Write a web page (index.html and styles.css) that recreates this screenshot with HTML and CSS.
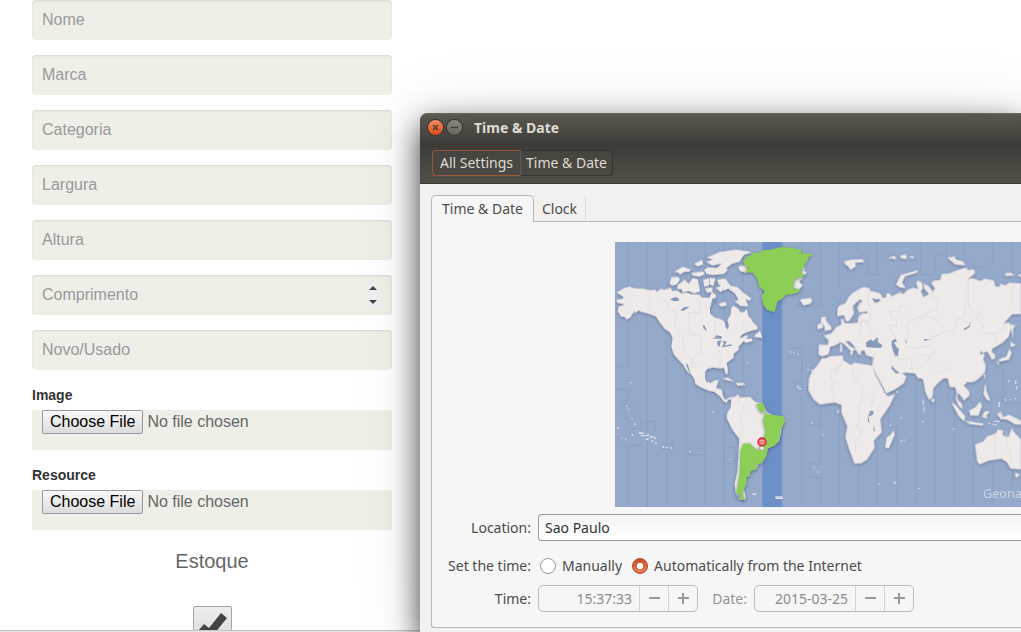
FILE: index.html
```html
<!DOCTYPE html>
<html lang="pt">
<head>
<meta charset="utf-8">
<title>Time &amp; Date</title>
<link rel="stylesheet" href="styles.css">
</head>
<body>
<main class="browser">
  <form class="product">
    <input class="field" type="text" placeholder="Nome" aria-label="Nome">
    <input class="field" type="text" placeholder="Marca" aria-label="Marca">
    <input class="field" type="text" placeholder="Categoria" aria-label="Categoria">
    <input class="field" type="text" placeholder="Largura" aria-label="Largura">
    <input class="field" type="text" placeholder="Altura" aria-label="Altura">
    <div class="number">
      <input class="field" type="number" placeholder="Comprimento" aria-label="Comprimento">
      <div class="stepper">
        <button type="button" aria-label="Increase"><svg width="8" height="4" viewBox="0 0 8 4"><path d="M0 4L4 0L8 4Z"/></svg></button>
        <button type="button" aria-label="Decrease"><svg width="8" height="4" viewBox="0 0 8 4"><path d="M0 0H8L4 4Z"/></svg></button>
      </div>
    </div>
    <input class="field" type="text" placeholder="Novo/Usado" aria-label="Novo/Usado">
    <div class="upload">
      <label for="image">Image</label>
      <input class="file" id="image" type="file">
    </div>
    <div class="upload">
      <label for="resource">Resource</label>
      <input class="file" id="resource" type="file">
    </div>
    <div class="stock">
      <label for="stock">Estoque</label>
      <span class="tick">
        <input id="stock" type="checkbox" checked>
        <svg width="29" height="26" viewBox="0 0 29 26"><path d="M0 18L6 11L11 15L23 0L29 5L12 26Z"/></svg>
      </span>
    </div>
  </form>
  <div class="edge"></div>
</main>

<section class="window">
  <header class="titlebar">
    <button class="control close" type="button" aria-label="Close"><svg width="15" height="15" viewBox="0 0 15 15"><path d="M5 5L10 10M10 5L5 10"/></svg></button>
    <button class="control minimize" type="button" aria-label="Minimize"><svg width="15" height="15" viewBox="0 0 15 15"><path d="M4 7.500H11"/></svg></button>
    <h1>Time &amp; Date</h1>
  </header>
  <nav class="toolbar">
    <button class="crumb first" type="button">All Settings</button><button class="crumb" type="button">Time &amp; Date</button>
  </nav>
  <div class="content">
    <div class="tabs">
      <button class="tab active" type="button">Time &amp; Date</button>
      <button class="tab" type="button">Clock</button>
      <div class="rule"></div>
    </div>
    <div class="panel">
      <div class="map">
        <svg viewBox="15 12 1218 795" preserveAspectRatio="xMinYMin slice" role="img" aria-label="World map of time zones">
          <defs>
            <filter id="coast" x="-5%" y="-5%" width="110%" height="110%"><feDropShadow dx="0" dy="3" stdDeviation="4" flood-color="#45536e" flood-opacity=".65"/></filter>
          </defs>
          <rect class="sea" x="15" y="12" width="1218" height="795"/>
          <rect class="zone" x="457" y="12" width="60" height="795"/>
          <path class="zone" d="M495 774H520V783H495Z"/>
          <g class="meridians">
            <path d="M55 12V386H15M112 12V807M170 12V807M228 12V807M286 12V807M343 12V807M400 12V807M516 12V807M575 12V175H563V204H632V12M575 330V807M575 330H537V357H575V435H557V458H575"/>
            <path d="M15 454H55V488H32V499H60L92 547V572H68L42 520V500M112 807V550H135V575M15 590L52 622H112M55 622V807M155 616H187V634H155ZM235 630H286V650H235ZM343 629H375V677H343ZM632 807V718H601V677H632V560H602V551H632V360L590 400"/>
            <path d="M688 12V150M688 190V260M745 12V35L775 65V110H802V12M932 12V110H975V50H1010V12M1060 12L1065 70L1100 88H1130L1150 70V12M1207 12V110M688 480V807M745 640V807M802 620V807M860 450V480H835V568H862V807M918 396V807M975 480V807M1033 396V807M1090 490V807M1150 650V807M1180 396V495H1233M1207 690V807M1015 460V490L1030 500M1090 494H1060V470M1233 300L1190 325L1175 345V396"/>
          </g>
          <g class="land" filter="url(#coast)">
            <path d="M20 163L30 158L40 151L60 145L66 149L80 151L100 152L122 157L136 155L140 162L152 153L166 155L182 149L186 159L202 158L214 166L230 164L245 169L268 169L275 178L298 180L306 162L318 171L316 184L308 188L309 197L300 206L300 226L314 239L330 242L344 251L346 267L353 274L357 264L352 246L362 230L363 210L370 204L384 211L391 223L403 222L410 213L416 236L426 245L427 251L441 264L444 273L424 278L408 283L396 290L388 300L398 298L410 291L414 296L408 301L425 303L428 309L406 315L402 308L392 319L386 325L386 335L371 347L371 359L350 375L353 392V408L347 408L342 390L328 391L310 388L292 393L286 400L285 420L289 432L304 435L312 428L326 426L322 440L318 450L335 455L339 475L346 486L358 478L370 477L372 482L354 485L350 495L340 489L331 476L314 462L296 458L270 447L256 438L254 425L241 405L235 384L228 374L229 382L241 409L230 398L219 379L210 370L192 350L184 326L188 301L181 284L164 272L150 254L138 235L113 226L93 221L86 217L74 226L74 218L61 238L15 266L50 244L42 236L34 236L23 220L27 205L45 200L21 193L20 186L36 183L42 178Z"/>
            <path d="M184 118L203 116L210 124L200 139L186 143L179 136ZM192 102L218 86L242 94L239 100L222 102L210 110L204 103ZM202 142L224 125L236 137L249 120L264 124L270 160L252 166L236 159L218 163L216 154L202 153ZM244 105L279 100L285 108L268 116L248 112ZM252 77L276 66L280 79L263 85ZM282 95L295 88L355 93L342 108L308 111L290 108ZM280 125L298 121L296 144L282 145ZM300 120L316 121L310 144L298 139ZM318 149L338 142L344 154L331 162ZM322 125L346 122L362 144L382 147L399 163L424 181L418 189L407 182L415 205L392 204L374 190L386 186L375 166L354 151L344 157L325 137ZM290 58L330 42L380 35L426 42L402 51L388 71L365 78L344 94L320 92L335 76L307 82L289 72L308 64ZM284 151L307 148L307 162L292 164ZM325 197L347 191L350 202L333 206ZM435 291L450 279L457 300L433 297ZM396 83L412 80L411 105L390 99L384 86ZM570 185L586 182L600 180L608 187L600 198L580 202ZM335 421L355 419L372 430L354 427ZM377 435L400 435L407 440L383 443Z"/>
            <path d="M374 476L384 469L390 478L420 477L435 491L458 496L470 522L520 552L507 610L475 630L450 674L440 690L414 704L400 740L408 785L388 784L377 766L374 738L382 700L388 602L367 575L350 540L352 524L362 509L364 484Z"/>
            <path d="M573 108L577 88L587 88L581 97L591 104L583 111ZM548 138L559 119H581L567 131L578 142L567 154L550 150Z"/>
            <g transform="translate(570 0)">
              <path d="M112 215L116 204L136 195L147 176L160 163L175 155L184 149L195 147L210 152L209 158L238 165L247 175L244 184L225 183L215 179L225 195L238 191L245 180L258 177L259 166L268 165L275 175L299 164L311 168L320 157L340 149L355 154L348 136L354 127L365 133L369 151L362 160L371 178L387 168L374 153L370 136L386 144L398 162L405 151L394 136L400 128L421 126L424 108L449 106L468 98L498 89L504 96L522 94L525 105L502 125L516 120L542 129L552 122L581 127L586 145L600 146L600 137L616 143L627 134L663 137V228L637 228L611 256L628 254L634 270L626 296L610 312L591 324L577 332L575 342L585 350V362L575 364L567 348L560 340L548 347L544 336L540 349L554 348L550 364L557 382L555 402L538 420L525 430L511 434L503 431L491 443L507 459L509 472L492 487L484 476L473 464L472 484L486 499L488 514L475 502L468 483L470 462L465 447L450 447L443 421L431 421L416 433L400 451L398 474L388 487L376 462L370 427L364 420L354 421L345 406L318 404L301 406L288 397L274 382L275 393L288 407L303 404L319 416L312 435L285 454L259 466L247 443L229 410L216 385L222 359L199 352L193 337L181 340L184 352L174 347L161 322L149 310L136 309L149 324L168 335L159 338L157 347L146 331L130 317L121 313L105 322L91 326L85 349L65 355L55 348L57 320L83 321L86 307L71 293L94 286L109 267L124 260L123 245L129 241L133 255L153 256L174 254L174 239L187 225L202 226L201 220L177 223L172 208L187 188L178 184L158 205L162 227L147 249L138 250L132 231L112 235Z"/>
              <path d="M66 360L78 361L89 355L128 352L130 367L153 381L162 374L216 383L224 405L255 466L264 475L285 468L269 503L241 543L245 583L222 607L224 629L201 665L183 676L163 677L148 635L136 597L142 566L124 522L125 501L104 493L60 500L41 485L25 456L27 422L36 400L54 380Z"/>
              <path d="M64 238L78 236L77 247L92 264L95 274L75 279L73 263L63 253ZM52 261L65 254L70 268L53 275ZM132 70L155 65L188 64L193 72L165 74L168 84L151 96L145 85L136 80ZM288 139L302 111L354 96L350 104L315 115L306 134L317 150L299 148ZM442 59L463 55L468 65L490 71L494 82L465 79ZM263 59L285 54L289 64ZM300 53L318 49L320 63L304 61ZM325 56L342 55L340 62ZM615 106L632 104L643 112L618 114ZM650 110H663V118ZM654 257L640 270L638 304L634 270L631 260L639 258L641 265ZM633 311L643 320L648 316L642 326L630 325ZM629 331L634 345L627 365L598 371L596 364L619 356ZM590 368L597 375L593 382ZM550 411L556 408L555 423ZM280 578L284 590L266 632L255 628L260 597L270 591ZM396 479L404 486L400 494L395 489ZM454 494L466 500L496 535L492 549L477 536ZM507 518L527 507L540 491L546 503L535 533L512 533ZM494 548L521 552L550 557L548 563L510 558ZM550 526L557 519L570 521L559 532L562 542L547 537ZM553 444L557 440L560 460L571 489L560 485L551 470ZM590 525L605 527L609 538L626 530L663 548V560L645 559L622 545L602 543ZM525 620L550 610L560 596L588 586L592 575L609 577L608 591L625 598L635 570L640 580L663 605V694L632 692L620 672L604 662L566 668L540 679L532 672ZM646 705L659 708L651 720L645 713ZM110 520L117 515L116 526ZM121 316L126 321V341L120 342ZM149 344L159 342L155 354Z"/>
            </g>
          </g>
          <g class="current" filter="url(#coast)">
            <path d="M400 68L409 56L426 51L424 44L450 46L455 37L480 35L510 28L549 29L556 34L573 34L575 45L562 48L590 46L612 49L596 57L592 70L583 78L584 86L573 97L582 117L555 122L549 152L575 154L562 164L545 169L527 170L515 184L503 190L498 206L494 223L473 216L464 206L459 197L455 175L464 160L449 148L441 121L428 104L406 101L416 89L404 83Z"/>
            <path d="M438 497L458 496L468 515L459 520L476 529L519 535L526 550L511 576L507 608L494 623L474 631L470 652L456 676L441 678L442 693L421 700L420 715L410 716L409 737L399 760L400 775L408 785L389 781L379 763L389 706L391 640L399 617L419 616L437 632L447 638L448 623L458 615L466 579L458 545L466 527L448 518Z"/>
          </g>
          <path class="lake" d="M180 184L195 177L205 180L208 188L192 190ZM211 217L223 207L240 206L219 219ZM278 261L284 263L291 280L281 272ZM309 302L319 292L335 295L336 302ZM323 309L334 305L328 328L321 318ZM336 308L351 311L343 323L363 319L366 323L336 328L341 316ZM307 182L320 179L322 198L302 202ZM767 315L781 304L790 310L799 299L806 300L803 311L818 323L811 330L770 328ZM845 309L857 302L861 311L852 313L859 326L867 333L864 353L854 355L845 323ZM942 303L962 304L943 309ZM887 303L891 315L886 313ZM1060 273L1077 264L1081 250L1080 266L1065 276ZM773 537L780 518L791 520L789 530ZM775 534L779 556L773 550ZM792 561L795 581L790 577ZM380 765L394 775L386 779Z"/>
          <g class="borders">
            <path d="M119 157V220L138 224M136 160L165 186L177 212L201 224L195 267L220 299L222 332L245 365L248 390L260 385M270 180V224H238V288L274 292L271 345L247 360V388M324 330L334 350L329 388M316 240V302M402 252V275L418 280M386 479V496L402 501L401 517L390 530L399 565L393 590V610M388 610L395 618"/>
            <path d="M775 160V199L783 215L780 246L751 250L748 287L768 305M770 250L777 276L803 307M748 155L745 184L751 205L749 230L756 252L751 270M859 300L842 280L840 261L858 266L861 247L844 242L842 219L868 222L870 208L886 200M889 307L900 284L889 269L894 252L911 244L980 213L988 186L970 180L969 153M930 237L954 235L980 246L1005 280M888 327L915 330L939 327L966 324L964 299L978 293L1005 282L1031 278L1042 252L1037 245L1061 238L1070 190L1067 165L1072 149L1068 124M1076 123V205L1091 222L1112 225L1097 241L1114 252L1125 287L1151 285L1180 279L1185 250L1178 242M1151 285L1161 310L1148 318M1212 140L1202 166L1210 206M852 345L867 365L898 359L906 376L902 396M925 357L947 350L963 355L974 330M900 393H922L943 376L960 366L953 350M977 396L991 405L1002 387L1026 400M693 360V382L674 412M697 380L672 395L663 396V426L675 432L662 456L672 465L670 493M795 340L787 358V375L798 385M728 386V410L742 430L761 450L752 475L759 486L744 510L750 538L738 570L751 570V596L738 602L736 645M728 400L748 422M783 468L792 483L782 506L776 535L812 568M1154 584V668M1190 579V633H1202V690"/>
          </g>
          <g class="islets">
            <path d="M60 432h5v4h-5zM48 501h4v4h-4zM55 512h4v4h-4zM64 540h4v4h-4zM73 556h5v5h-5zM22 568h5v5h-5zM34 598h3v4h-3zM45 602h4v4h-4zM65 588h5v5h-5zM86 583h15v5h-15zM92 591h25v4h-25zM112 587h6v5h-6zM120 594h10v6h-10zM132 598h7v5h-7zM123 607h8v4h-8zM108 601h8v5h-8zM135 613h5v5h-5zM102 619h4v3h-4zM156 624h6v5h-6zM166 627h8v4h-8zM180 628h5v5h-5zM237 638h5v5h-5zM308 520h4v5h-4zM359 662h5v3h-5zM427 766h12v5h-12zM496 775h23v8h-23zM560 445h8v4h-8zM568 450h6v5h-6zM539 339h4v5h-4zM550 343h4v3h-4zM560 346h5v3h-5zM410 373h4v4h-4zM592 393h5v4h-5zM602 395h8v4h-8zM603 552h5v5h-5zM636 589h4v4h-4zM610 686h4v5h-4zM622 700h4v5h-4zM804 736h4v4h-4zM851 731h8v6h-8zM925 749h6v4h-6zM871 607h5v5h-5zM880 604h4v5h-4zM838 560h4v5h-4zM858 460h7v4h-7zM872 537h4v5h-4zM936 548h5v5h-5zM1029 570h4v5h-4zM938 487h4v13h-4zM941 506h3v18h-3zM1165 492h5v15h-5zM1167 521h7v4h-7zM1152 548h18v4h-18zM1135 555h6v3h-6zM1148 559h12v3h-12zM1183 484h5v4h-5zM1198 482h5v3h-5zM1213 480h6v4h-6zM1215 427h4v12h-4zM1218 444h4v10h-4zM1194 427h5v4h-5z"/>
          </g>
          <g class="pin">
            <circle cx="456" cy="630" r="7"/>
            <circle cx="456" cy="612" r="12"/>
            <path d="M449 608H463M449 615H463"/>
          </g>
          <text x="1119" y="780">Geona</text>
        </svg>
      </div>
      <form class="settings">
        <label class="name" for="location">Location:</label>
        <input class="entry" id="location" type="text" value="Sao Paulo">
        <span class="name mode">Set the time:</span>
        <div class="choices mode">
          <label><input type="radio" name="mode">Manually</label>
          <label><input type="radio" name="mode" checked>Automatically from the Internet</label>
        </div>
        <label class="name" for="time">Time:</label>
        <div class="moment">
          <div class="spin">
            <input id="time" type="text" value="15:37:33" disabled>
            <button type="button" disabled aria-label="Earlier time"><svg width="11" height="11" viewBox="0 0 11 11"><path d="M0 5H11"/></svg></button>
            <button type="button" disabled aria-label="Later time"><svg width="11" height="11" viewBox="0 0 11 11"><path d="M0 5H11M5 0V11"/></svg></button>
          </div>
          <label class="faded" for="date">Date:</label>
          <div class="spin">
            <input id="date" type="text" value="2015-03-25" disabled>
            <button type="button" disabled aria-label="Earlier date"><svg width="11" height="11" viewBox="0 0 11 11"><path d="M0 5H11"/></svg></button>
            <button type="button" disabled aria-label="Later date"><svg width="11" height="11" viewBox="0 0 11 11"><path d="M0 5H11M5 0V11"/></svg></button>
          </div>
        </div>
      </form>
    </div>
  </div>
</section>
</body>
</html>
```
FILE: styles.css
```css
* { box-sizing: border-box; }

body {
  margin: 0;
  height: 100vh;
  overflow: hidden;
  background: #fff;
  font-family: "Liberation Sans", Arial, sans-serif;
}

button { margin: 0; padding: 0; border: 0; background: none; font: inherit; color: inherit; }
svg { display: block; }

/* Product form in the browser behind */
.browser { display: flex; flex-direction: column; height: 100vh; }
.product {
  flex: 1;
  min-height: 0;
  overflow: hidden;
  display: flex;
  flex-direction: column;
  gap: 15px;
  width: 424px;
  padding: 0 32px;
}
.edge { flex: none; height: 2px; background: #e4e4e4; border-top: 1px solid #c4c4c4; }
.product > * { flex: none; }

.field {
  display: block;
  width: 100%;
  height: 40px;
  padding: 0 10px;
  border: 0;
  border-radius: 4px;
  background: #efefe8;
  box-shadow: inset 0 1px 2px rgba(0, 0, 0, .1);
  font: 16px "Liberation Sans", Arial, sans-serif;
  color: #666;
}
.field::placeholder { color: #999; opacity: 1; }
.field::-webkit-inner-spin-button { appearance: none; }

.number { position: relative; }
.stepper {
  position: absolute;
  top: 6px;
  right: 12px;
  display: flex;
  flex-direction: column;
  width: 15px;
  height: 28px;
  background: #eee;
}
.stepper button { flex: 1; display: grid; place-items: center; }
.stepper path { fill: #444; }

.upload { display: flex; flex-direction: column; gap: 5px; }
.upload label { font-size: 14px; font-weight: bold; line-height: 20px; color: #333; }
.file {
  width: 100%;
  height: 40px;
  padding: 0 10px;
  background: #efefe8;
  font: 16px "Liberation Sans", Arial, sans-serif;
  color: #666;
}
.file::file-selector-button {
  height: 24px;
  margin: 0 4px 0 0;
  padding: 0 7px;
  border: 1px solid #999;
  border-radius: 2px;
  background: linear-gradient(#f8f8f8, #dcdcdc);
  font: 16px "Liberation Sans", Arial, sans-serif;
  color: #000;
}

.stock { display: flex; flex-direction: column; align-items: center; gap: 28px; }
.stock label { font-size: 20px; line-height: 33px; color: #666; }
.tick { display: grid; }
.tick input {
  grid-area: 1 / 1;
  appearance: none;
  width: 39px;
  height: 39px;
  margin: 0;
  border: 1px solid #a5a5a5;
  border-radius: 2px;
  background: linear-gradient(#eee, #d8d8d8);
}
.tick svg { grid-area: 1 / 1; place-self: center; pointer-events: none; }
.tick path { fill: #444; }

/* Settings window */
.window {
  position: absolute;
  top: 113px;
  left: 420px;
  right: 0;
  bottom: 0;
  display: flex;
  flex-direction: column;
  border-radius: 7px 0 0 0;
  background: #f2f1f0;
  box-shadow: 0 12px 30px rgba(0, 0, 0, .75), 0 0 70px rgba(0, 0, 0, .1);
  font-family: "Noto Sans", sans-serif;
  font-size: 14px;
  line-height: 20px;
  color: #4c4c4c;
}
.titlebar {
  display: flex;
  align-items: center;
  gap: 4px;
  height: 29px;
  padding: 0 8px 1px;
  border-top: 1px solid #6b675c;
  border-radius: 7px 0 0 0;
  background: linear-gradient(#5b584e, #403f3a);
}
.titlebar h1 { margin: 0 0 0 8px; font-size: 14px; line-height: 20px; color: #dfdbd2; }
.control { width: 15px; height: 15px; border-radius: 50%; box-shadow: 0 0 0 1px #34332f; }
.control path { fill: none; stroke: #3a3935; stroke-width: 1.2; }
.close { background: linear-gradient(#f58a62, #e0491a); }
.minimize { background: linear-gradient(#8b887f, #66645d); }

.toolbar {
  display: flex;
  align-items: center;
  height: 42px;
  padding: 0 12px;
  border-bottom: 1px solid #36352f;
  background: linear-gradient(#3b3a36, #514f46);
  color: #dfdbd2;
}
.crumb {
  height: 26px;
  padding: 0 5px;
  border: 1px solid #33322e;
  border-left-width: 0;
  border-radius: 0 4px 4px 0;
  background: linear-gradient(#45443e, #4b4942);
  white-space: nowrap;
}
.first { width: 89px; border: 1px solid #9c553b; border-right-color: #5d5a52; border-radius: 4px 0 0 4px; }

.content { flex: 1; display: flex; flex-direction: column; padding: 11px 0 4px 11px; }
.tabs { display: flex; align-items: flex-end; height: 27px; }
.tab { height: 26px; padding: 0 8px; border-bottom: 1px solid #b9b6b2; border-right: 1px solid #dcdad8; }
.active {
  height: 27px;
  padding: 0 10px;
  border: 1px solid #b9b6b2;
  border-bottom: 0;
  border-radius: 5px 5px 0 0;
  background: #f6f6f6;
}
.rule { flex: 1; border-bottom: 1px solid #b9b6b2; }
.panel {
  flex: 1;
  padding: 20px 0 0;
  border: 1px solid #b9b6b2;
  border-width: 0 0 1px 1px;
  border-radius: 0 0 0 3px;
  background: #f6f6f6;
}

.map { margin-left: 183px; height: 265px; overflow: hidden; }
.map svg { width: 100%; height: 100%; }
.sea { fill: #95a9ca; }
.zone { fill: #6d8fc7; }
.meridians { fill: none; stroke: #899dc0; stroke-width: 2; }
.land { fill: #eeeaea; }
.current { fill: #8dcf57; }
.lake { fill: #8599bb; }
.borders { fill: none; stroke: #dedada; stroke-width: 2; }
.islets { fill: #d4d9e4; }
.pin circle { fill: #ececec; stroke: #999; stroke-width: 2; }
.pin circle + circle { fill: #ef6b6b; stroke: #d02c30; stroke-width: 4; }
.pin path { stroke: #f8b5b5; stroke-width: 3; }
.map text { fill: #c9d3e5; font-size: 38px; }

.settings {
  display: grid;
  grid-template-columns: 99px 1fr;
  grid-template-rows: 27px 26px 27px;
  gap: 9px 7px;
  align-items: center;
  padding-top: 7px;
}
.name { text-align: right; white-space: nowrap; }
.mode { padding-top: 6px; }
.entry {
  width: 100%;
  height: 27px;
  padding: 0 6px;
  border: 1px solid #999;
  border-right: 0;
  border-radius: 4px 0 0 4px;
  background: linear-gradient(#f4f4f4, #fff);
  font: 14px "Noto Sans", sans-serif;
  color: #333;
}
.choices { display: flex; gap: 10px; padding-left: 2px; }
.choices label { display: flex; align-items: center; gap: 6px; white-space: nowrap; }
.choices input {
  appearance: none;
  width: 16px;
  height: 16px;
  margin: 0;
  border: 1px solid #999;
  border-radius: 50%;
  background: #fff;
}
.choices input:checked {
  border-color: #a9482a;
  background: radial-gradient(circle, #fff 0 3px, transparent 3px), linear-gradient(#cc4f26, #ea8055);
}
.moment { display: flex; align-items: center; gap: 7px; }
.faded { width: 42px; text-align: right; color: #96938f; }
.spin {
  display: flex;
  width: 160px;
  height: 27px;
  border: 1px solid #bdbbb9;
  border-radius: 5px;
}
.spin input {
  flex: 1;
  min-width: 0;
  padding: 0 7px;
  border: 0;
  background: none;
  font: 14px "Noto Sans", sans-serif;
  text-align: right;
  color: #8e8b87;
}
.spin button { width: 29px; display: grid; place-items: center; border-left: 1px solid #d5d3d1; }
.spin path { fill: none; stroke: #9b9894; stroke-width: 2; }
```
